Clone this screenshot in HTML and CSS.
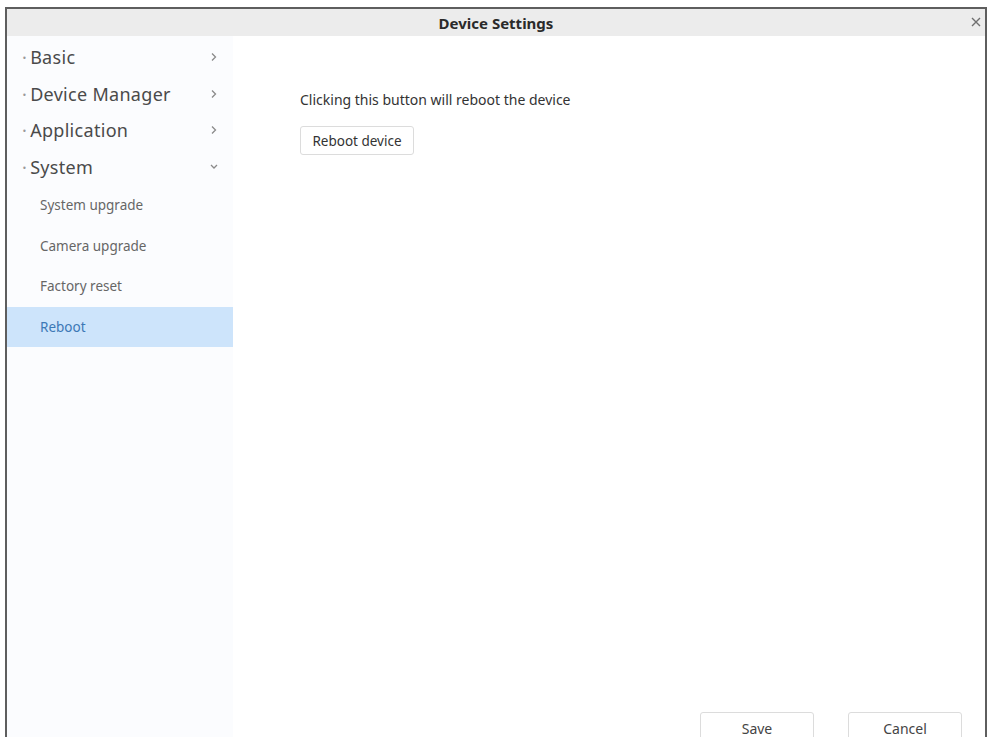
FILE: index.html
```html
<!DOCTYPE html>
<html>
<head>
    <title>Device Settings</title>
    <meta charset="UTF-8">
    <link rel="stylesheet" href="styles.css">
</head>
<body>
    <div class="dialog">
        <div class="dialog-header">
            <span class="dialog-title">Device Settings</span>
            <span class="dialog-close">
                <svg width="10" height="10" viewBox="0 0 10 10"><path d="M1 1L9 9M9 1L1 9" stroke="#6f6f6f" stroke-width="1.4" fill="none"/></svg>
            </span>
        </div>
        <div class="dialog-body">
            <ul class="menu">
                <li class="menu-item"><span class="menu-label"><i class="dot">·</i>Basic</span>
                    <svg class="chev" width="8" height="10" viewBox="0 0 8 10"><path d="M2 1.5L5.5 5L2 8.5" stroke="#8a8a8a" stroke-width="1.3" fill="none"/></svg></li>
                <li class="menu-item"><span class="menu-label"><i class="dot">·</i>Device Manager</span>
                    <svg class="chev" width="8" height="10" viewBox="0 0 8 10"><path d="M2 1.5L5.5 5L2 8.5" stroke="#8a8a8a" stroke-width="1.3" fill="none"/></svg></li>
                <li class="menu-item"><span class="menu-label"><i class="dot">·</i>Application</span>
                    <svg class="chev" width="8" height="10" viewBox="0 0 8 10"><path d="M2 1.5L5.5 5L2 8.5" stroke="#8a8a8a" stroke-width="1.3" fill="none"/></svg></li>
                <li class="menu-item"><span class="menu-label"><i class="dot">·</i>System</span>
                    <svg class="chev" width="8" height="10" viewBox="0 0 8 10"><path d="M1 3L4 6L7 3" stroke="#8a8a8a" stroke-width="1.3" fill="none"/></svg></li>
                <li class="sub-item">System upgrade</li>
                <li class="sub-item">Camera upgrade</li>
                <li class="sub-item">Factory reset</li>
                <li class="sub-item active">Reboot</li>
            </ul>
            <div class="content">
                <p class="hint">Clicking this button will reboot the device</p>
                <button class="btn">Reboot device</button>
                <div class="footer">
                    <button class="btn btn-wide">Save</button>
                    <button class="btn btn-wide">Cancel</button>
                </div>
            </div>
        </div>
    </div>
</body>
</html>
```
FILE: styles.css
```css
html, body {
    margin: 0;
    height: 737px;
    overflow: hidden;
    background: #fff;
}

body {
    font-family: "Noto Sans", "Open Sans", sans-serif;
    color: #444;
}

.dialog {
    margin: 7px 3px 0 5px;
    height: 760px;
    border: 2px solid #5e5e5e;
    border-bottom: none;
    display: flex;
    flex-direction: column;
    box-sizing: border-box;
}

.dialog-header {
    height: 27px;
    background: #ececec;
    display: flex;
    align-items: center;
    justify-content: center;
    position: relative;
    flex-shrink: 0;
}

.dialog-title {
    font-size: 15px;
    font-weight: 700;
    color: #2a2a2a;
}

.dialog-close {
    position: absolute;
    right: 4px;
    top: 8px;
    line-height: 0;
}

.dialog-body {
    flex: 1;
    display: flex;
}

.menu {
    list-style: none;
    margin: 0;
    padding: 3px 0 0;
    width: 226px;
    background: #fbfcfe;
    flex-shrink: 0;
}

.menu-item {
    height: 36.5px;
    display: flex;
    align-items: center;
    justify-content: space-between;
    padding: 0 15px 0 15px;
    font-size: 18px;
    letter-spacing: 0.3px;
    color: #4a4a4a;
}

.dot {
    font-style: normal;
    color: #999;
    margin-right: 3px;
}

.sub-item {
    height: 40.5px;
    display: flex;
    align-items: center;
    padding-left: 33px;
    font-size: 13.5px;
    color: #666;
}

.sub-item.active {
    background: #cde4fb;
    color: #3c78b6;
}

.content {
    flex: 1;
    display: flex;
    flex-direction: column;
    align-items: flex-start;
    padding: 54px 23px 23px 67px;
}

.hint {
    margin: 0 0 17px;
    font-size: 14px;
    line-height: 19px;
    color: #333;
}

.btn {
    font-family: inherit;
    font-size: 13.5px;
    color: #333;
    background: #fff;
    border: 1px solid #dcdcdc;
    border-radius: 3px;
    width: 114px;
    height: 29px;
    padding: 0;
}

.footer {
    margin-top: auto;
    align-self: stretch;
    display: flex;
    justify-content: flex-end;
    gap: 34px;
}

.btn-wide {
    height: 32px;
    font-size: 14px;
    color: #444;
}
```
